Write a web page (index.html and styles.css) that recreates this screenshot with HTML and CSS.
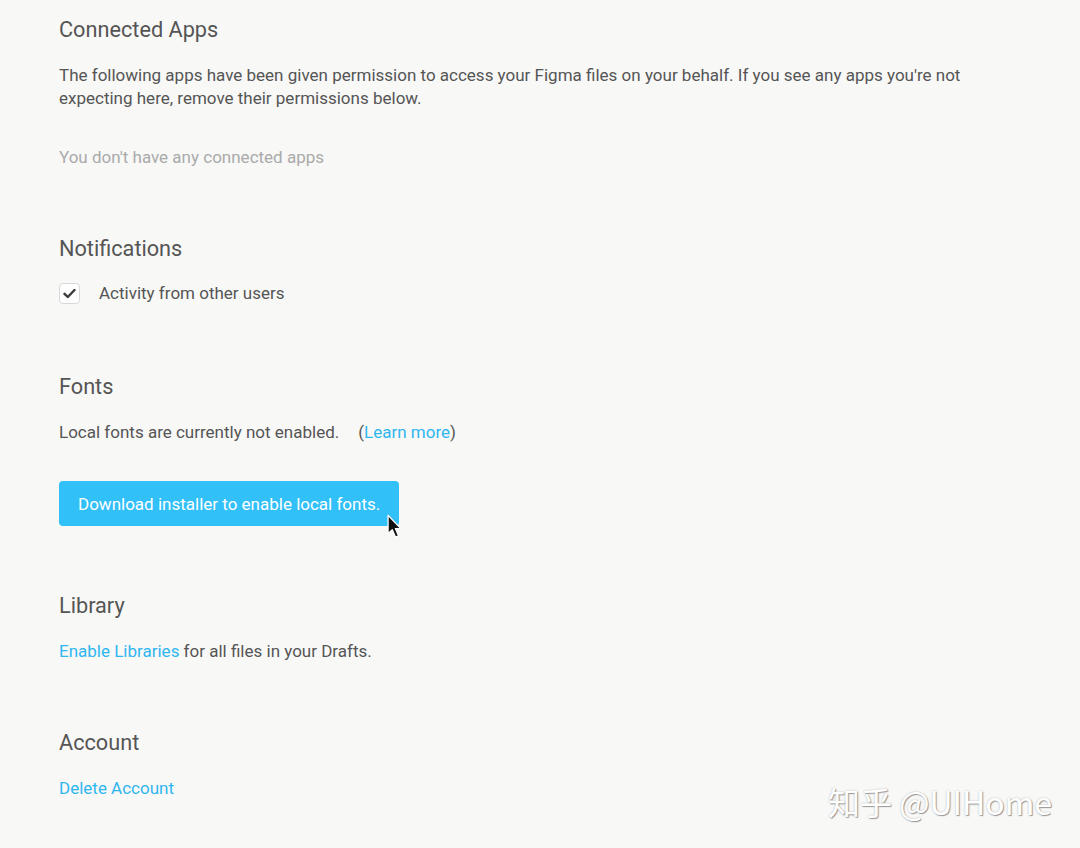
FILE: index.html
```html
<!DOCTYPE html>
<html>
<head>
<meta charset="utf-8">
<link rel="stylesheet" href="styles.css">
</head>
<body>
<main class="page">
  <section class="section">
    <h2 class="heading">Connected Apps</h2>
    <p class="text">The following apps have been given permission to access your Figma files on your behalf. If you see any apps you're not expecting here, remove their permissions below.</p>
    <p class="text muted empty">You don't have any connected apps</p>
  </section>

  <section class="section">
    <h2 class="heading">Notifications</h2>
    <label class="check-row">
      <span class="checkbox">
        <svg width="13" height="11" viewBox="0 0 13 11"><path d="M1.5 5.8 L4.8 9 L11.5 2" fill="none" stroke="#3a3a3a" stroke-width="2.4" stroke-linecap="round" stroke-linejoin="round"/></svg>
      </span>
      <span class="text">Activity from other users</span>
    </label>
  </section>

  <section class="section">
    <h2 class="heading">Fonts</h2>
    <p class="text">Local fonts are currently not enabled.<span class="learn">(<a class="link" href="#">Learn more</a>)</span></p>
    <div class="btn-wrap">
      <button class="btn">Download installer to enable local fonts.</button>
      <svg class="cursor" width="17" height="26" viewBox="0 0 16 24"><path d="M1 1 L1 18 L5 14.5 L8 21.5 L10.8 20.3 L7.9 13.5 L13 13.5 Z" fill="#111" stroke="#fff" stroke-width="1.2" stroke-linejoin="round"/></svg>
    </div>
  </section>

  <section class="section">
    <h2 class="heading">Library</h2>
    <p class="text"><a class="link" href="#">Enable Libraries</a> for all files in your Drafts.</p>
  </section>

  <section class="section">
    <h2 class="heading">Account</h2>
    <p class="text"><a class="link" href="#">Delete Account</a></p>
  </section>
</main>
<div class="watermark">知乎 @UIHome</div>
</body>
</html>
```

FILE: styles.css
```css
html, body {
  margin: 0;
  padding: 0;
  background: #f8f8f7;
}
body {
  width: 1080px;
  height: 848px;
  overflow: hidden;
  position: relative;
  font-family: Roboto, "Liberation Sans", sans-serif;
  color: #555;
}
.page {
  padding: 16px 0 0 59px;
}
.section {
  margin-bottom: 66px;
}
.heading {
  margin: 0 0 20px 0;
  font-size: 21.7px;
  line-height: 28px;
  font-weight: 400;
  color: #555;
}
.text {
  margin: 0;
  font-size: 17px;
  line-height: 23px;
  color: #555;
  max-width: 960px;
}
.muted {
  color: #aaa;
}
.empty {
  margin-top: 36px;
}
.link {
  color: #30b6ef;
  text-decoration: none;
}
.learn {
  margin-left: 19px;
}
.check-row {
  display: flex;
  align-items: center;
  gap: 19px;
  height: 24px;
  margin-top: -2px;
  padding-bottom: 2px;
}
.checkbox {
  width: 19px;
  height: 19px;
  border: 1px solid #d8d8d8;
  border-radius: 4px;
  background: #fff;
  display: flex;
  align-items: center;
  justify-content: center;
}
.btn-wrap {
  position: relative;
  margin-top: 37px;
  margin-bottom: 1px;
  width: 340px;
}
.btn {
  display: block;
  width: 340px;
  height: 45px;
  padding: 0 0 0 19px;
  text-align: left;
  border: none;
  border-radius: 4px;
  background: #31c0f7;
  color: #fff;
  font-family: Roboto, "Liberation Sans", sans-serif;
  font-size: 17px;
}
.cursor {
  position: absolute;
  left: 328px;
  top: 33px;
}
.watermark {
  position: absolute;
  right: 28px;
  bottom: 24px;
  font-family: "Noto Sans CJK SC", "Noto Sans", sans-serif;
  font-size: 32px;
  color: #fff;
  text-shadow: 1px 1px 1px #999, 0 0 2px #bbb;
}
```
